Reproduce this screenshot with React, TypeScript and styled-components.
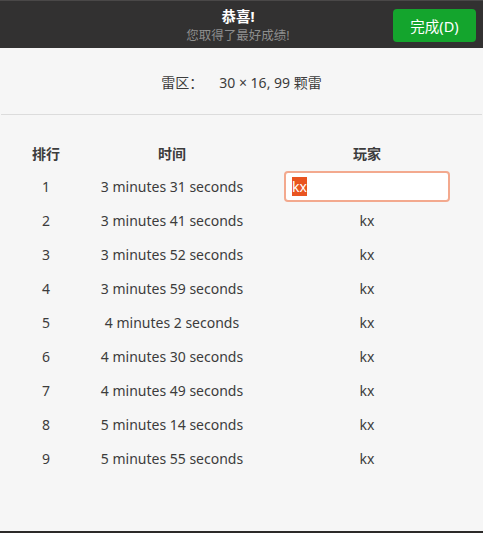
import React from "react";
import styled, { createGlobalStyle } from "styled-components";

const Global = createGlobalStyle`
  html, body { margin: 0; padding: 0; background: #3a3330; }
  body { font-family: "Noto Sans", "Noto Sans CJK SC", sans-serif; }
`;

const Window = styled.div`
  width: 483px;
  height: 531px;
  display: flex;
  flex-direction: column;
  background: #f6f6f6;
  border-bottom: 2px solid #2c2a29;
  color: #3c3c3c;
  font-size: 14px;
`;

const HeaderBar = styled.header`
  height: 48px;
  flex: none;
  background: #323131;
  border-top: 1px solid #4a4848;
  box-sizing: border-box;
  display: grid;
  grid-template-columns: 1fr auto 1fr;
  align-items: center;
  padding: 0 7px 0 8px;
`;

const Titles = styled.div`
  grid-column: 2;
  display: flex;
  flex-direction: column;
  align-items: center;
  gap: 2px;
  margin: 3px 8px 0 0;
`;

const Title = styled.div`
  color: #ffffff;
  font-weight: 700;
  font-size: 14.5px;
  line-height: 18px;
`;

const Subtitle = styled.div`
  color: #8e8e8e;
  font-size: 12.5px;
  line-height: 18px;
`;

const DoneButton = styled.button`
  grid-column: 3;
  justify-self: end;
  width: 83px;
  height: 33px;
  border: none;
  border-radius: 4px;
  background: #14a52d;
  color: #ffffff;
  font-family: inherit;
  font-size: 14.5px;
  padding: 0;
  margin-top: 1px;
`;

const Info = styled.div`
  display: flex;
  justify-content: center;
  gap: 16px;
  padding: 25px 0 21px;
  line-height: 20px;
`;

const Separator = styled.hr`
  margin: 0 1px;
  border: none;
  height: 1px;
  background: #dcdcdc;
`;

const Table = styled.div`
  display: grid;
  grid-template-columns: 28px 216px 166px;
  column-gap: 4px;
  padding: 22px 0 0 32px;
`;

const HeadCell = styled.div`
  height: 32px;
  display: flex;
  align-items: center;
  justify-content: center;
  font-weight: 700;
  white-space: nowrap;
`;

const Cell = styled.div`
  height: 34px;
  display: flex;
  align-items: center;
  justify-content: center;
  white-space: nowrap;
`;

const Entry = styled.div`
  width: 166px;
  height: 31px;
  box-sizing: border-box;
  border: 2px solid #f3a98e;
  border-radius: 4px;
  background: #ffffff;
  display: flex;
  align-items: center;
  padding-left: 6px;
`;

const Selected = styled.span`
  background: #e95420;
  color: #ffffff;
  line-height: 19px;
`;

const scores = [
  "3 minutes 31 seconds",
  "3 minutes 41 seconds",
  "3 minutes 52 seconds",
  "3 minutes 59 seconds",
  "4 minutes 2 seconds",
  "4 minutes 30 seconds",
  "4 minutes 49 seconds",
  "5 minutes 14 seconds",
  "5 minutes 55 seconds",
];

export default function App() {
  return (
    <>
      <Global />
      <Window>
        <HeaderBar>
          <Titles>
            <Title>恭喜!</Title>
            <Subtitle>您取得了最好成绩!</Subtitle>
          </Titles>
          <DoneButton>完成(D)</DoneButton>
        </HeaderBar>
        <Info>
          <span>雷区：</span>
          <span>30 × 16, 99 颗雷</span>
        </Info>
        <Separator />
        <Table>
          <HeadCell>排行</HeadCell>
          <HeadCell>时间</HeadCell>
          <HeadCell>玩家</HeadCell>
          {scores.map((s, i) => (
            <React.Fragment key={i}>
              <Cell>{i + 1}</Cell>
              <Cell>{s}</Cell>
              <Cell>
                {i === 0 ? (
                  <Entry>
                    <Selected>kx</Selected>
                  </Entry>
                ) : (
                  "kx"
                )}
              </Cell>
            </React.Fragment>
          ))}
        </Table>
      </Window>
    </>
  );
}
